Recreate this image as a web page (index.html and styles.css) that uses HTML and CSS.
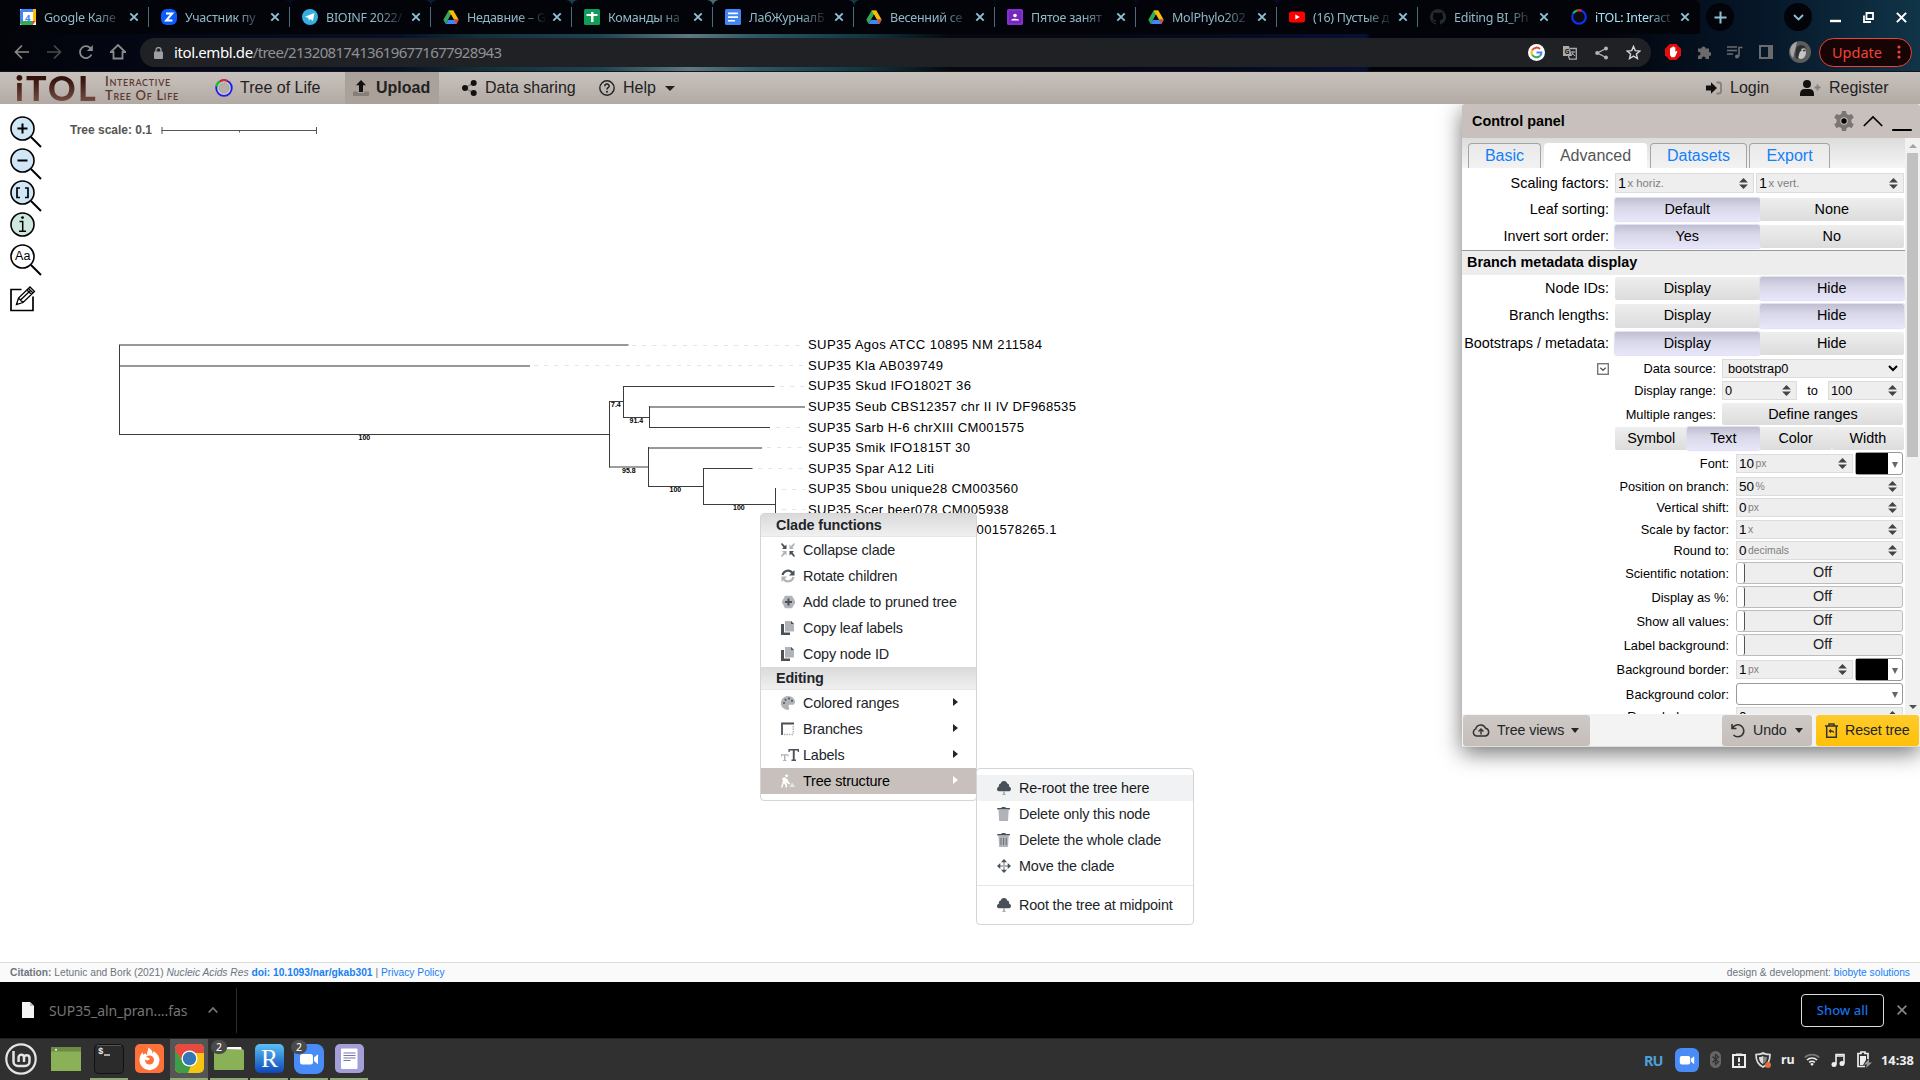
FILE: index.html
```html
<!DOCTYPE html>
<html lang="en">
<head>
<meta charset="utf-8">
<title>iTOL: Interactive Tree Of Life</title>
<link rel="stylesheet" href="styles.css">
</head>
<body>
<svg class="sprite" aria-hidden="true">
  <symbol id="i-x" viewBox="0 0 10 10"><path d="M1.300 1.300l7.400 7.400M8.700 1.300L1.300 8.700" fill="none" stroke="currentColor" stroke-width="1.900"/></symbol>
  <symbol id="i-drive" viewBox="0 0 16 16"><path d="M5.600 1.500h4.800L5.200 10.600 2.700 15 .3 10.800z" fill="#34a853"/><path d="M5.600 1.500h4.800l5.300 9.300h-4.800z" fill="#fbbc04"/><path d="M5.100 10.800h10.600L13.300 15H2.700z" fill="#4285f4"/><path d="M10.900 10.800h4.800L13.300 15z" fill="#ea4335"/><path d="M8 5.800l2.800 5H5.200z" fill="#05060c"/></symbol>
  <symbol id="i-tree" viewBox="0 0 14 14"><path d="M7 0c2 0 3 1.300 3.200 2.600C12 3 12.400 4.500 12 5.600c1.800.6 2.300 2.200 1.800 3.300-.4.900-1.300 1.300-2.300 1.300h-9C1.400 10.200.4 9.800.1 8.900-.3 7.700.4 6.100 2 5.600 1.600 4.400 2 3 3.800 2.600 4 1.300 5 0 7 0z" fill="#495057"/><path d="M6 10h2v2.800l1.200 1.200H4.800L6 12.800z" fill="#b0b4b8"/></symbol>
  <symbol id="i-copy" viewBox="0 0 14 14"><path d="M0 3h3v8.500h6V14H0z" fill="#495057"/><path d="M4 0h6l3 3v7.500H4z" fill="#b0b4b8"/><path d="M10 0l3 3h-3z" fill="#495057"/></symbol>
  <symbol id="i-spin" viewBox="0 0 8 10"><path d="M4 0l4 4H0zM4 10L0 6h8z" fill="#444"/></symbol>
  <symbol id="i-video" viewBox="0 0 30 30"><rect width="30" height="30" rx="8" fill="#4a8cf7"/><rect x="6" y="10" width="13" height="10.500" rx="2.500" fill="#fff"/><path d="M20 13.500l4-3.300v10l-4-3.300z" fill="#fff"/></symbol>
</svg>

<header class="chrome">
  <div class="tabs">
    <div class="tab"><svg class="fav" viewBox="0 0 16 16"><rect width="16" height="16" fill="#fff"/><path d="M0 2a2 2 0 012-2h11v3H3v10H0z" fill="#4285f4"/><path d="M13 0h3v12h-3z" fill="#fbbc04"/><path d="M0 12h13v4H2a2 2 0 01-2-2z" fill="#34a853"/><path d="M12.500 12H16l-3.500 4z" fill="#ea4335"/><text x="5" y="11.500" font-size="9.500" font-weight="700" fill="#4285f4">4</text></svg><span>Google Кале</span><svg class="x"><use href="#i-x"/></svg></div>
    <div class="tab"><svg class="fav" viewBox="0 0 16 16"><rect width="16" height="16" rx="6" fill="#0b5cff"/><path d="M5 4.500h6.200L5.200 11.500h6.200" fill="none" stroke="#fff" stroke-width="2"/></svg><span>Участник пу</span><svg class="x"><use href="#i-x"/></svg></div>
    <div class="tab"><svg class="fav" viewBox="0 0 16 16"><circle cx="8" cy="8" r="8" fill="#37aee2"/><path d="M3 7.800l9.500-3.900-1.600 8-2.600-1.900-1.500 1.400-.4-2.500z" fill="#fff"/></svg><span>BIOINF 2022/</span><svg class="x"><use href="#i-x"/></svg></div>
    <div class="tab"><svg class="fav"><use href="#i-drive"/></svg><span>Недавние – G</span><svg class="x"><use href="#i-x"/></svg></div>
    <div class="tab"><svg class="fav" viewBox="0 0 16 16"><rect width="16" height="16" rx="1.500" fill="#0f9d58"/><path d="M7 3h2.500v10H7zM2.500 5h11v2h-11z" fill="#fff"/></svg><span>Команды на</span><svg class="x"><use href="#i-x"/></svg></div>
    <div class="tab"><svg class="fav" viewBox="0 0 16 16"><rect width="16" height="16" rx="1.500" fill="#4285f4"/><path d="M3 3.500h10v1.700H3zM3 7.200h10v1.700H3zM3 10.900h7v1.700H3z" fill="#fff"/></svg><span>ЛабЖурналБ</span><svg class="x"><use href="#i-x"/></svg></div>
    <div class="tab"><svg class="fav"><use href="#i-drive"/></svg><span>Весенний се</span><svg class="x"><use href="#i-x"/></svg></div>
    <div class="tab"><svg class="fav" viewBox="0 0 16 16"><rect width="16" height="16" rx="1.500" fill="#8430ce"/><rect x="2" y="2" width="12" height="12" fill="#7627bb"/><circle cx="8" cy="6.500" r="1.800" fill="#fff"/><path d="M4 11.500c0-2.400 8-2.400 8 0z" fill="#fff"/></svg><span>Пятое занят</span><svg class="x"><use href="#i-x"/></svg></div>
    <div class="tab"><svg class="fav"><use href="#i-drive"/></svg><span>MolPhylo202</span><svg class="x"><use href="#i-x"/></svg></div>
    <div class="tab"><svg class="fav" viewBox="0 0 16 16"><rect y="2.500" width="16" height="11" rx="2.500" fill="#f00"/><path d="M6.300 5.500l4.500 2.500-4.500 2.500z" fill="#fff"/></svg><span>(16) Пустые д</span><svg class="x"><use href="#i-x"/></svg></div>
    <div class="tab plain"><svg class="fav" viewBox="0 0 16 16"><path d="M8 0a8 8 0 00-2.500 15.600c.4.100.5-.2.500-.4v-1.500c-2.200.5-2.700-1-2.700-1-.4-.9-.9-1.100-.9-1.100-.7-.5.100-.5.100-.5.800.1 1.200.8 1.200.8.700 1.200 1.900.9 2.300.7.100-.5.300-.9.500-1.100-1.800-.2-3.600-.9-3.600-4 0-.9.300-1.600.8-2.100-.1-.2-.4-1 .1-2.100 0 0 .7-.2 2.200.8a7.500 7.500 0 014 0c1.500-1 2.200-.8 2.200-.8.400 1.100.2 1.900.1 2.100.5.600.8 1.300.8 2.100 0 3.100-1.900 3.700-3.700 4 .3.200.6.700.6 1.500v2.200c0 .2.100.5.500.4A8 8 0 008 0z" fill="#24292f"/></svg><span>Editing BI_Ph</span><svg class="x"><use href="#i-x"/></svg></div>
    <div class="tab plain active"><svg class="fav" viewBox="0 0 16 16"><circle cx="8" cy="8" r="6.800" fill="#0b0b10" stroke="#1432ff" stroke-width="2"/><path d="M2.200 4.300A6.800 6.800 0 016 1.500" fill="none" stroke="#0c3" stroke-width="2"/><path d="M6 1.500a6.800 6.800 0 014.500.2" fill="none" stroke="#f22" stroke-width="2"/></svg><span>iTOL: Interact</span><svg class="x"><use href="#i-x"/></svg></div>
    <div class="round"><svg width="13" height="13" viewBox="0 0 13 13"><path d="M6.500 .5v12M.5 6.500h12" stroke="#8fc1d4" stroke-width="2"/></svg></div>
    <div class="round more"><svg width="11" height="7" viewBox="0 0 11 7"><path d="M1 1l4.500 4.500L10 1" fill="none" stroke="#8fc1d4" stroke-width="1.800"/></svg></div>
    <div class="winctl">
      <svg width="11" height="11" viewBox="0 0 11 11"><path d="M0 9h11" stroke="#fff" stroke-width="2.400"/></svg>
      <svg width="11" height="11" viewBox="0 0 11 11"><path d="M3.500 1h6.500v6H3.500zM1 3.500v6.500h7" fill="none" stroke="#fff" stroke-width="1.800"/></svg>
      <svg width="11" height="11" viewBox="0 0 10 10"><path d="M.8.8l8.400 8.400M9.200.8L.8 9.200" stroke="#fff" stroke-width="1.900"/></svg>
    </div>
  </div>
  <div class="toolbar">
    <svg class="nav" viewBox="0 0 16 16"><path d="M15 8H2M8 1.500L1.500 8 8 14.500" fill="none" stroke="#8a8a8a" stroke-width="1.700"/></svg>
    <svg class="nav" viewBox="0 0 16 16"><path d="M1 8h13M8 1.500L14.500 8 8 14.500" fill="none" stroke="#4a4a4a" stroke-width="1.700"/></svg>
    <svg class="nav" viewBox="0 0 16 16"><path d="M13.500 10.500A6 6 0 1113 4.700" fill="none" stroke="#8a8a8a" stroke-width="1.800"/><path d="M14.800 1v6h-6z" fill="#8a8a8a"/></svg>
    <svg class="nav" viewBox="0 0 16 16"><path d="M3.500 14.500V8H.8L8 1l7.200 7h-2.700v6.500z" fill="none" stroke="#8a8a8a" stroke-width="1.800"/></svg>
    <div class="omnibox">
      <svg width="9" height="12" viewBox="0 0 9 12"><rect y="4.500" width="9" height="7.500" rx="1" fill="#9aa0a6"/><path d="M2 5V3a2.500 2.500 0 015 0v2" fill="none" stroke="#9aa0a6" stroke-width="1.300"/></svg>
      <div class="url"><b>itol.embl.de</b>/tree/213208174136196771677928943</div>
      <svg width="17" height="17" viewBox="0 0 17 17"><circle cx="8.500" cy="8.500" r="8.500" fill="#fff"/><path d="M12 5A5 5 0 004.300 6" fill="none" stroke="#ea4335" stroke-width="2"/><path d="M4.300 6a5 5 0 000 5" fill="none" stroke="#fbbc04" stroke-width="2"/><path d="M4.300 11a5 5 0 007.500 1" fill="none" stroke="#34a853" stroke-width="2"/><path d="M11.800 12a5 5 0 001.600-3.500H8.500" fill="none" stroke="#4285f4" stroke-width="2"/></svg>
      <svg width="14" height="15" viewBox="0 0 14 15"><path d="M0 1h6l3 10H0z" fill="#aaa"/><path d="M7 3.500h6.300v10.700H6.500L5.500 11" fill="none" stroke="#aaa" stroke-width="1.300"/><path d="M8 7h4.500M10 6v1c0 2-1 3-2 3.500M9 8l3 3" stroke="#aaa" fill="none"/><text x="1.500" y="8.500" font-size="7" font-weight="700" fill="#222">G</text></svg>
      <svg width="13" height="14" viewBox="0 0 13 14"><path d="M11 2.500L2.500 7l8.500 4.500" fill="none" stroke="#b5b5b5" stroke-width="1.400"/><circle cx="11" cy="2.400" r="2" fill="#b5b5b5"/><circle cx="2.200" cy="7" r="2" fill="#b5b5b5"/><circle cx="11" cy="11.600" r="2" fill="#b5b5b5"/></svg>
      <svg width="15" height="15" viewBox="0 0 16 16"><path d="M8 1.500l1.900 4.500 4.900.4-3.700 3.200 1.100 4.800L8 11.900l-4.200 2.500 1.100-4.800L1.200 6.400l4.900-.4z" fill="none" stroke="#d5d5d5" stroke-width="1.500"/></svg>
    </div>
    <div class="exts">
      <svg width="16" height="16" viewBox="0 0 16 16"><path d="M4.700 0h6.600L16 4.700v6.600L11.300 16H4.700L0 11.300V4.700z" fill="#e40d0d"/><path d="M5 7V4.200h1.300V3.300h1.400v-.8H9v.8h1.300V8l1.200-1.300.9.700-2 4.500-1 1.400H6.500L5 11z" fill="#fff"/></svg>
      <svg width="14" height="14" viewBox="0 0 14 14"><path d="M1 3.500h3.500a2 2 0 114 0H12v3.700a1.900 1.900 0 110 3.600V14H8.500a1.900 1.900 0 10-3.600 0H1v-3.500a1.900 1.900 0 100-3.600z" fill="#6b6b6b"/></svg>
      <svg width="16" height="13" viewBox="0 0 16 13"><path d="M0 1h10M0 4.500h10M0 8h6" stroke="#6b6b6b" stroke-width="1.600"/><circle cx="10" cy="10.500" r="2" fill="#6b6b6b"/><path d="M12 10.500V1.500h3.500" fill="none" stroke="#6b6b6b" stroke-width="1.600"/></svg>
      <svg width="14" height="14" viewBox="0 0 14 14"><path d="M1 1h12v12H1z" fill="none" stroke="#6b6b6b" stroke-width="2"/><path d="M9 1h4v12H9z" fill="#6b6b6b"/></svg>
      <svg width="22" height="22" viewBox="0 0 22 22"><circle cx="11" cy="11" r="11" fill="#5c5c5c"/><ellipse cx="12" cy="11" rx="5" ry="7" fill="#c4c4c4"/><path d="M7 9c0-6 9-7 10-1-4-2-6 0-8 10-3 0-3-5-2-9z" fill="#2e2e2e"/><path d="M10 9.500h2.500M14 9.500h2.500" stroke="#333" stroke-width="1.300"/><path d="M2 6c1-3 4-5 6-5L4 17c-2-2-4-7-2-11z" fill="#a5a5a5"/></svg>
      <div class="update">Update<svg width="4" height="14" viewBox="0 0 4 14"><circle cx="2" cy="2" r="1.600" fill="#f0423a"/><circle cx="2" cy="7" r="1.600" fill="#f0423a"/><circle cx="2" cy="12" r="1.600" fill="#f0423a"/></svg></div>
    </div>
  </div>
</header>

<nav class="sitebar">
  <div class="logo"><span class="l-main">iTOL</span><span class="l-sub"><i>Interactive</i><i>Tree Of Life</i></span></div>
  <a class="item tol"><svg width="18" height="18" viewBox="0 0 18 18"><circle cx="9" cy="9" r="7.800" fill="#c9c3be" stroke="#1c1cf0" stroke-width="1.800"/><circle cx="9" cy="9" r="4.800" fill="#b5b0ac" stroke="#8f8f8f" stroke-dasharray="1 1"/><path d="M1.400 7.500A7.800 7.800 0 015 2.300" fill="none" stroke="#12d012" stroke-width="2"/><path d="M5 2.300a7.800 7.800 0 017.500-.3" fill="none" stroke="#e22" stroke-width="2"/></svg>Tree of Life</a>
  <a class="item upload"><svg width="16" height="16" viewBox="0 0 16 16"><path d="M0 11.500h5v1.500h6v-1.500h5V16H0z" fill="#857e79"/><path d="M8 0l5 5.200H10V12H6V5.200H3z" fill="#111"/></svg>Upload</a>
  <a class="item share"><svg width="15" height="16" viewBox="0 0 15 16"><path d="M11.500 3L3 8l8.500 5" fill="none" stroke="#8d8680" stroke-width="1.500"/><circle cx="11.700" cy="3" r="3" fill="#111"/><circle cx="3" cy="8" r="3" fill="#111"/><circle cx="11.700" cy="13" r="3" fill="#111"/></svg>Data sharing</a>
  <a class="item help"><svg width="16" height="16" viewBox="0 0 16 16"><circle cx="8" cy="8" r="7.200" fill="none" stroke="#222" stroke-width="1.400"/><path d="M5.800 6.200c.2-3 4.600-2.600 4.400 0-.1 1.500-2.200 1.500-2.200 3.200" fill="none" stroke="#222" stroke-width="1.500"/><circle cx="8" cy="11.700" r="1" fill="#222"/></svg>Help<b class="caret"></b></a>
  <a class="item login"><svg width="16" height="14" viewBox="0 0 16 14"><path d="M10.500 1.500h2.200c1.300 0 2.300.9 2.300 2.200v6.600c0 1.300-1 2.200-2.300 2.200h-2.200" fill="none" stroke="#857e79" stroke-width="1.800"/><path d="M0 4.500h5V1.200L11 7l-6 5.800V9.500H0z" fill="#111"/></svg>Login</a>
  <a class="item register"><svg width="21" height="16" viewBox="0 0 21 16"><circle cx="7" cy="4" r="4" fill="#111"/><path d="M0 16v-2.500C0 11 2 9 4.500 9h5C12 9 14 11 14 13.500V16z" fill="#111"/><path d="M17.500 4.500v6M14.500 7.500h6" stroke="#857e79" stroke-width="1.800"/></svg>Register</a>
</nav>

<main class="canvas">
  <div class="tools">
    <svg viewBox="0 0 32 32"><path d="M21 21l10 10" stroke="#000" stroke-width="2"/><circle cx="12.500" cy="12.500" r="11.500" fill="#d0e7f8" stroke="#000" stroke-width="1.600"/><path d="M12.500 7.500v10M7.500 12.500h10" stroke="#000" stroke-width="2"/></svg>
    <svg viewBox="0 0 32 32"><path d="M21 21l10 10" stroke="#000" stroke-width="2"/><circle cx="12.500" cy="12.500" r="11.500" fill="#d0e7f8" stroke="#000" stroke-width="1.600"/><path d="M7.500 12.500h10" stroke="#000" stroke-width="2"/></svg>
    <svg viewBox="0 0 32 32"><path d="M21 21l10 10" stroke="#000" stroke-width="2"/><circle cx="12.500" cy="12.500" r="11.500" fill="#d0e7f8" stroke="#000" stroke-width="1.600"/><path d="M10 8H7v9.500h3M15 8h3v9.500h-3" fill="none" stroke="#000" stroke-width="1.700"/></svg>
    <svg viewBox="0 0 32 32"><circle cx="12.500" cy="12.500" r="11.500" fill="#cee8e0" stroke="#000" stroke-width="1.600"/><circle cx="12.500" cy="5.600" r="1.400"/><path d="M9.500 9.500h3.200v9.500M9 19.200h7" fill="none" stroke="#000" stroke-width="1.500"/></svg>
    <svg viewBox="0 0 32 32"><path d="M21 21l10 10" stroke="#000" stroke-width="2"/><circle cx="12.500" cy="12.500" r="11.500" fill="#fff" stroke="#000" stroke-width="1.600"/><text x="5" y="16" font-size="12.500" textLength="15.500">Aa</text></svg>
    <svg class="edit" viewBox="0 0 32 32"><path d="M11.500 4.500H1v21h22V11.500" fill="none" stroke="#000" stroke-width="1.700"/><path d="M6.500 19.500l2-6.500L20 2l4.500 4.500L13 17.500zM8.500 13l4.500 4.500M17 5l4.500 4.500M18.500 3.500l4.500 4.500M10.500 15L20 6" fill="none" stroke="#000" stroke-width="1.300"/></svg>
  </div>
  <svg class="tree" viewBox="42 104 1420 858" width="1420" height="858">
    <text class="scale" x="70" y="134" textLength="82">Tree scale: 0.1</text>
    <path d="M161.500 130.500H316.500M162 127v7M316.500 127v7M239.500 130v2.500" class="ruler"/>
    <g class="guide">
      <path d="M632 345.500H805M534 365.500H805M780 386.500H805M776 427.500H805M767 447.500H805M758 468.500H805M782 489.500H805M782 509.500H805"/>
    </g>
    <g class="soft"><path d="M119 345H628.500M119 366H530M649 407H805M649 448H762"/></g>
    <g class="branch">
      <path d="M119.500 345V434.500M119 434.500H609.500M609.500 401V467.500M609 401.500H623.500M623.500 386V417.500M623 386.500H774.500M623 417.500H649.500M649.500 406V428M649 427.500H770M609 467H648.500M648.500 447V486.500M648 486.500H703.500M703.500 468V505M703 468.500H752.500M703 504.500H775.500M775.500 488V530"/>
    </g>
    <g class="leaf">
      <text x="808" y="349.200" textLength="234">SUP35 Agos ATCC 10895 NM 211584</text>
      <text x="808" y="369.700" textLength="135">SUP35 Kla AB039749</text>
      <text x="808" y="390.200" textLength="163">SUP35 Skud IFO1802T 36</text>
      <text x="808" y="410.800" textLength="268">SUP35 Seub CBS12357 chr II IV DF968535</text>
      <text x="808" y="431.500" textLength="216">SUP35 Sarb H-6 chrXIII CM001575</text>
      <text x="808" y="451.900" textLength="162">SUP35 Smik IFO1815T 30</text>
      <text x="808" y="472.600" textLength="126">SUP35 Spar A12 Liti</text>
      <text x="808" y="493" textLength="210">SUP35 Sbou unique28 CM003560</text>
      <text x="808" y="513.700" textLength="200.500">SUP35 Scer beer078 CM005938</text>
      <text x="976.500" y="534" textLength="80">001578265.1</text>
    </g>
    <g class="boot">
      <text x="358.500" y="440">100</text><text x="611" y="407">7.4</text><text x="629.500" y="423">91.4</text><text x="622" y="473">95.8</text><text x="669.500" y="492.300">100</text><text x="733" y="510">100</text>
    </g>
  </svg>
</main>

<footer class="cite"><div><b>Citation:</b> Letunic and Bork (2021) <i>Nucleic Acids Res</i> <a><b>doi: 10.1093/nar/gkab301</b></a> | <a>Privacy Policy</a></div><div>design &amp; development: <a>biobyte solutions</a></div></footer>

<section class="downloads">
  <svg width="12" height="16" viewBox="0 0 12 16"><path d="M0 0h8l4 4v12H0z" fill="#f4f4f2"/><path d="M8 0l4 4H8z" fill="#bbb"/></svg>
  <span class="fname">SUP35_aln_pran....fas</span>
  <svg class="chev" width="10" height="6" viewBox="0 0 10 6"><path d="M.7 5.500L5 1l4.300 4.500" fill="none" stroke="#777" stroke-width="1.700"/></svg>
  <i class="vline"></i>
  <button class="showall">Show all</button>
  <svg class="close" width="10" height="10" viewBox="0 0 10 10"><path d="M.6.6l8.800 8.800M9.400.6L.6 9.400" stroke="#8a8a8a" stroke-width="1.500"/></svg>
</section>

<section class="taskbar">
  <div class="apps">
    <div class="app mint"><svg width="32" height="32" viewBox="0 0 32 32"><circle cx="16" cy="16" r="14.700" fill="none" stroke="#e4e4e4" stroke-width="2.200"/><path d="M8.500 8v10.500a4.500 4.500 0 004.500 4.500h7a4.500 4.500 0 004.500-4.500v-4a2.800 2.800 0 00-5.500 0v4.500M19 18.500v-4a2.700 2.700 0 00-5.400 0v4.500" fill="none" stroke="#e4e4e4" stroke-width="2.500"/></svg></div>
    <div class="app folder"><svg width="30" height="24" viewBox="0 0 30 24"><rect width="30" height="24" fill="#8bb158"/><rect width="30" height="4.500" fill="#6c8c43"/><circle cx="5" cy="2.700" r="1" fill="#fff"/></svg></div>
    <div class="app run"><svg width="30" height="30" viewBox="0 0 30 30"><rect x=".5" y=".5" width="29" height="29" rx="4" fill="#2b2b2b" stroke="#111"/><path d="M3 1.500h24" stroke="#555"/><text x="4" y="10" font-family="Liberation Mono" font-size="9" font-weight="700" fill="#eee">$</text><path d="M10 11h6" stroke="#eee" stroke-width="1.300"/></svg></div>
    <div class="app"><svg width="29" height="29" viewBox="0 0 29 29"><rect width="29" height="29" rx="5" fill="#ff7139"/><path d="M13 3.500c4 2 4.500 4 4.500 6 1-.6 1-1.600.8-2.500 4.200 2.500 6.200 6 6.200 9.200a10 10 0 01-20 0c0-4 1.500-6 3-8l.8 2.600 2-1.600c.5.900 1 1.500 2 1.800C11.500 8.500 13.500 7 13 3.500z" fill="#fff"/><circle cx="14.500" cy="16" r="4.500" fill="#ff7139"/><path d="M8 13c3-1 5 .5 7 1.500-1 2-3 2-4.500 1.500z" fill="#fff"/></svg></div>
    <div class="app run cur"><svg width="29" height="29" viewBox="0 0 29 29"><rect width="29" height="29" rx="5" fill="#f6c514"/><path d="M0 8V5a5 5 0 015-5h19a5 5 0 015 5v4H14.500L8 17z" fill="#e84a3f"/><path d="M0 6l9 13.500 7 2L13 29H5a5 5 0 01-5-5z" fill="#3f9c47"/><circle cx="14.500" cy="14.500" r="8" fill="#fff"/><circle cx="14.500" cy="14.500" r="6.700" fill="#3377b5"/></svg></div>
    <div class="app run"><svg width="30" height="24" viewBox="0 0 30 24"><path d="M12 2.500L13.500 0H27l1 3z" fill="#fff"/><rect y="2.500" width="30" height="20.500" rx="1" fill="#8bb158"/></svg><em>2</em></div>
    <div class="app run"><svg width="29" height="29" viewBox="0 0 29 29"><defs><linearGradient id="rg" x2="0" y2="1"><stop stop-color="#5cc0f5"/><stop offset="1" stop-color="#0d47b8"/></linearGradient></defs><rect width="29" height="29" rx="5" fill="url(#rg)"/><text x="6" y="23" font-family="Liberation Serif" font-size="26" fill="#fff" textLength="17" lengthAdjust="spacingAndGlyphs">R</text></svg></div>
    <div class="app run"><svg width="30" height="30"><use href="#i-video"/></svg><em>2</em></div>
    <div class="app run"><svg width="29" height="29" viewBox="0 0 29 29"><rect width="29" height="29" rx="5" fill="#a39fd9"/><rect x="6" y="4.500" width="16.500" height="20.500" rx="1" fill="#fff"/><path d="M8.500 9h12M8.500 11.500h12M8.500 14h12M8.500 16.500h7" stroke="#7673a8" stroke-width="1.100"/></svg></div>
  </div>
  <div class="tray">
    <b class="ru">RU</b>
    <svg width="24" height="24"><use href="#i-video"/></svg>
    <svg class="bt" width="11" height="17" viewBox="0 0 11 17"><rect width="11" height="17" rx="5.500" fill="#666"/><path d="M2.500 5.500l6 5.500-3 2.500v-10l3 2.500-6 5.500" fill="none" stroke="#303030" stroke-width="1.200"/></svg>
    <svg class="clip" width="14" height="16" viewBox="0 0 14 16"><path d="M1 3h12v12H1z" fill="none" stroke="#eee" stroke-width="2"/><path d="M4 1.500h6V4H4z" fill="#eee"/><path d="M7 5.500v4.500M7 11.500v2" stroke="#eee" stroke-width="2"/></svg>
    <svg class="shield" width="16" height="16" viewBox="0 0 16 16"><path d="M8 1c2 1.500 4.500 1.500 7 1.500C15 9 12.500 13 8 15 3.500 13 1 9 1 2.500 3.500 2.500 6 2.500 8 1z" fill="none" stroke="#ddd" stroke-width="1.700"/><path d="M8 4v8C5 10.500 4 8 4 5c1.500 0 3-.3 4-1z" fill="#ddd"/><path d="M8 4v8c3-1.500 4-4 4-7-1.500 0-3-.3-4-1z" fill="#888"/><circle cx="13" cy="13" r="3" fill="#e0703a"/></svg>
    <b class="kb">ru</b>
    <svg class="wifi" width="16" height="13" viewBox="0 0 16 13"><path d="M.7 4.500a10.500 10.500 0 0114.600 0" fill="none" stroke="#777" stroke-width="1.700"/><path d="M3 7a7.200 7.200 0 0110 0M5.200 9.400a4 4 0 015.600 0" fill="none" stroke="#eee" stroke-width="1.700"/><path d="M8 13L6.200 10.900a2.700 2.700 0 013.600 0z" fill="#eee"/></svg>
    <svg class="note" width="14" height="14" viewBox="0 0 14 14"><path d="M5 11.500V1.500h8v9" fill="none" stroke="#eee" stroke-width="1.600"/><path d="M5 3h8" stroke="#eee" stroke-width="1.500"/><circle cx="3" cy="11.500" r="2.500" fill="#eee"/><circle cx="11" cy="10.500" r="2.500" fill="#eee"/></svg>
    <svg class="bat" width="15" height="17" viewBox="0 0 15 17"><path d="M8 15.500H1V2.500h3V1h4v1.500h3V8" fill="none" stroke="#eee" stroke-width="1.700"/><path d="M3 5h6v4l-3 5H3z" fill="#eee"/><path d="M12 8l-5 5.500h3L9 17l6-5.500h-3z" fill="#999"/></svg>
    <b class="clock">14:38</b>
  </div>
</section>

<aside class="panel">
  <div class="p-head"><b>Control panel</b>
    <svg width="20" height="20" viewBox="0 0 20 20"><path d="M8 0h4l.7 3 2 1.100 3-1 2 3.500-2.300 2.100v2.600l2.300 2.100-2 3.500-3-1-2 1.100L12 20H8l-.7-3-2-1.100-3 1-2-3.500 2.300-2.100V8.700L.3 6.600l2-3.500 3 1 2-1.100z" fill="#7b7673"/><circle cx="10" cy="10" r="3.700" fill="#c7c0bc"/><circle cx="10" cy="10" r="2.700" fill="#000"/></svg>
    <svg width="20" height="12" viewBox="0 0 20 12"><path d="M.8 11L10 2l9.200 9" fill="none" stroke="#000" stroke-width="1.700"/></svg>
    <svg width="20" height="20" viewBox="0 0 20 20"><path d="M1 19h18" stroke="#000" stroke-width="2" stroke-linecap="round"/></svg>
  </div>
  <div class="p-main">
    <div class="p-body">
      <div class="p-tabs"><a class="t1">Basic</a><a class="t2 on">Advanced</a><a class="t3">Datasets</a><a class="t4">Export</a></div>
      <div class="row h20 g5"><label>Scaling factors:</label><div class="inp w139"><span>1</span><small>x horiz.</small><svg><use href="#i-spin"/></svg></div><div class="inp grow"><span>1</span><small>x vert.</small><svg><use href="#i-spin"/></svg></div></div>
      <div class="row h23 g5"><label>Leaf sorting:</label><div class="seg"><a class="on">Default</a><a>None</a></div></div>
      <div class="row h23 g4"><label>Invert sort order:</label><div class="seg"><a class="on">Yes</a><a>No</a></div></div>
      <div class="section">Branch metadata display</div>
      <div class="row h23 g2"><label>Node IDs:</label><div class="seg"><a>Display</a><a class="on">Hide</a></div></div>
      <div class="row h24 g4"><label>Branch lengths:</label><div class="seg"><a>Display</a><a class="on">Hide</a></div></div>
      <div class="row h23 g4"><label>Bootstraps / metadata:</label><div class="seg"><a class="on">Display</a><a>Hide</a></div></div>
      <div class="row sm h19 g4"><svg class="fold" width="12" height="12" viewBox="0 0 12 12"><rect x=".7" y=".7" width="10.600" height="10.600" fill="#fff" stroke="#777" stroke-width="1.400"/><path d="M3.300 4.800L6 7.300l2.700-2.500" fill="none" stroke="#555" stroke-width="1.300"/></svg><label>Data source:</label><div class="inp grow sel"><span>bootstrap0</span><svg viewBox="0 0 10 7"><path d="M1 1l4 4 4-4" fill="none" stroke="#000" stroke-width="2"/></svg></div></div>
      <div class="row sm h19 g3"><label>Display range:</label><div class="inp w75"><span>0</span><svg><use href="#i-spin"/></svg></div><i class="to">to</i><div class="inp w75"><span>100</span><svg><use href="#i-spin"/></svg></div></div>
      <div class="row sm h22 g3"><label>Multiple ranges:</label><div class="seg"><a>Define ranges</a></div></div>
      <div class="row h23 g2"><label></label><div class="seg"><a>Symbol</a><a class="on">Text</a><a>Color</a><a>Width</a></div></div>
      <div class="row in h23 g2"><label>Font:</label><div class="inp w117"><span>10</span><small>px</small><svg><use href="#i-spin"/></svg></div><div class="color blk"><i></i><u></u></div></div>
      <div class="row in h19 g2"><label>Position on branch:</label><div class="inp grow"><span>50</span><small>%</small><svg><use href="#i-spin"/></svg></div></div>
      <div class="row in h19 g2"><label>Vertical shift:</label><div class="inp grow"><span>0</span><small>px</small><svg><use href="#i-spin"/></svg></div></div>
      <div class="row in h19 g3"><label>Scale by factor:</label><div class="inp grow"><span>1</span><small>x</small><svg><use href="#i-spin"/></svg></div></div>
      <div class="row in h19 g2"><label>Round to:</label><div class="inp grow"><span>0</span><small>decimals</small><svg><use href="#i-spin"/></svg></div></div>
      <div class="row in h22 g2"><label>Scientific notation:</label><div class="toggle">Off</div></div>
      <div class="row in h22 g2"><label>Display as %:</label><div class="toggle">Off</div></div>
      <div class="row in h22 g2"><label>Show all values:</label><div class="toggle">Off</div></div>
      <div class="row in h22 g2"><label>Label background:</label><div class="toggle">Off</div></div>
      <div class="row in h23 g2"><label>Background border:</label><div class="inp w117"><span>1</span><small>px</small><svg><use href="#i-spin"/></svg></div><div class="color blk"><i></i><u></u></div></div>
      <div class="row in h22 g2"><label>Background color:</label><div class="color wide"><u></u></div></div>
      <div class="row in h19 g2"><label>Rounded corners:</label><div class="inp grow"><span>0</span><small>px</small><svg><use href="#i-spin"/></svg></div></div>
    </div>
    <div class="sbar"><b class="up"></b><i></i><b class="dn"></b></div>
  </div>
  <div class="p-foot">
    <a class="btn views"><svg width="18" height="13" viewBox="0 0 18 13"><path d="M4.500 12A3.700 3.700 0 013.700 4.900a5.200 5.200 0 019.900-.7A4 4 0 0113.500 12z" fill="none" stroke="#333" stroke-width="1.500"/><path d="M9 10.500V5.500M6.500 7.500L9 5l2.500 2.500" fill="none" stroke="#333" stroke-width="1.400"/></svg>Tree views<b class="caret"></b></a>
    <a class="btn undo"><svg width="14" height="15" viewBox="0 0 14 15"><path d="M1 1v4.500h4.500M1.500 5A6 6 0 112.500 12" fill="none" stroke="#333" stroke-width="1.600"/></svg>Undo<b class="caret"></b></a>
    <a class="btn reset"><svg width="13" height="15" viewBox="0 0 13 15"><path d="M0 3h13M4 3V1h5v2M1.700 3.500v10.700h9.600V3.500" fill="none" stroke="#333" stroke-width="1.500"/><path d="M3.500 8L6 5.800v1.400c2 0 3.200.8 3.200 3.300-.8-1.300-1.600-1.500-3.200-1.500v1.300z" fill="#333"/></svg>Reset tree</a>
  </div>
</aside>

<div class="menu main">
  <h6>Clade functions</h6>
  <a><svg viewBox="0 0 14 14"><path d="M0 1l1-1 3 3 1.500-1.500V6H1l1.500-1.500zM14 13l-1 1-3-3-1.500 1.500V8H13l-1.500 1.500z" fill="#495057"/><path d="M14 1l-1-1-3 3-1.500-1.500V6H13l-1.500-1.500zM0 13l1 1 3-3 1.500 1.500V8H1l1.500 1.500z" fill="#b0b4b8"/></svg>Collapse clade</a>
  <a><svg viewBox="0 0 14 14"><path d="M1.500 6A5.600 5.600 0 0111.500 4" fill="none" stroke="#495057" stroke-width="2.200"/><path d="M13.500 1v5.500H8z" fill="#495057"/><path d="M12.500 8a5.600 5.600 0 01-10 2" fill="none" stroke="#b0b4b8" stroke-width="2.200"/><path d="M.5 13V7.500H6z" fill="#b0b4b8"/></svg>Rotate children</a>
  <a><svg viewBox="0 0 14 14"><path d="M4 .8h7L14.500 7 11 13.200H4L.7 7z" fill="#b0b4b8"/><path d="M7.500 3.500v7M4 7h7" stroke="#495057" stroke-width="2"/></svg>Add clade to pruned tree</a>
  <a><svg><use href="#i-copy"/></svg>Copy leaf labels</a>
  <a><svg><use href="#i-copy"/></svg>Copy node ID</a>
  <h6 class="mid">Editing</h6>
  <a><svg viewBox="0 0 14 14"><path d="M7 0c4 0 7 2.800 7 6 0 2-1.500 2.800-3 2.800H9c-1.500 0-1.800 1.400-1.100 2.400.6 1 .4 2.800-1.200 2.800A7 7 0 017 0z" fill="#b0b4b8"/><circle cx="3" cy="7" r="1" fill="#495057"/><circle cx="4.500" cy="3.700" r="1" fill="#495057"/><circle cx="8" cy="2.500" r="1" fill="#495057"/><circle cx="11" cy="4.800" r="1" fill="#495057"/></svg>Colored ranges<s></s></a>
  <a><svg viewBox="0 0 14 14"><path d="M1 13V1.500h12" fill="none" stroke="#495057" stroke-width="1.800"/><path d="M3 12.500h10M12.300 4v8" fill="none" stroke="#b0b4b8" stroke-width="1.500" stroke-dasharray="1.500 1"/></svg>Branches<s></s></a>
  <a><svg class="tt" viewBox="0 0 18 14"><path d="M7.500 4V1H18v3h-1.300V2.500h-3v9H15V13H10.500v-1.500h1.300v-9h-3V4z" fill="#495057"/><path d="M0 8.500V6.300h7.500v2.200h-1V7.500h-2v4.500H5.500v1H2v-1h1V7.500H1v1z" fill="#b0b4b8"/></svg>Labels<s></s></a>
  <a class="hot"><svg viewBox="0 0 15 14"><circle cx="6" cy="1.500" r="1.500" fill="#fff"/><path d="M1 4l3-1 3 2 1.500 3.500 1.500 1-.7 1.200L6.500 9.500 5 8l1.500 3V14H4.800v-2.500L3 9.500 1.500 14H0l2-7z" fill="#fff"/><path d="M9 13.500L12 8.500l3 5z" fill="#e8e4e1"/></svg>Tree structure<s></s></a>
</div>
<div class="menu sub">
  <a class="hov"><svg><use href="#i-tree"/></svg>Re-root the tree here</a>
  <a><svg viewBox="0 0 14 14"><path d="M1.500 3h10.200l-.7 11H2.200z" fill="#b0b4b8"/><path d="M.3 1h4L5 0h3.200l.7 1h4v1.500H.3z" fill="#495057"/></svg>Delete only this node</a>
  <a><svg viewBox="0 0 14 14"><path d="M1.500 3h10.200l-.7 11H2.200z" fill="#b0b4b8"/><path d="M4 5v7M6.600 5v7M9.200 5v7" stroke="#6a7076"/><path d="M.3 1h4L5 0h3.200l.7 1h4v1.500H.3z" fill="#495057"/></svg>Delete the whole clade</a>
  <a><svg viewBox="0 0 14 14"><path d="M7 2v10M2 7h10" stroke="#b0b4b8" stroke-width="1.800"/><path d="M7 0l3 3.300H4zM7 14l3-3.300H4zM0 7l3.300-3v6zM14 7l-3.300-3v6z" fill="#495057"/></svg>Move the clade</a>
  <hr>
  <a><svg><use href="#i-tree"/></svg>Root the tree at midpoint</a>
</div>
</body>
</html>
```

FILE: styles.css
```css
*{box-sizing:border-box}
html,body{margin:0;height:100%}
body{width:1920px;height:1080px;overflow:hidden;display:flex;flex-direction:column;background:#fff;font-family:"Liberation Sans",Arial,sans-serif;font-size:14.4px;color:#212529;position:relative}
svg{display:block;flex:none}
.sprite{position:absolute;width:0;height:0}

/* browser frame */
.chrome{height:72px;flex:none;font-family:"Noto Sans",sans-serif;background:
  linear-gradient(90deg,transparent 1610px,rgba(6,26,46,.75) 1760px,rgba(18,56,76,.9) 1920px),
  linear-gradient(90deg,#03040a 0,#040818 200px,#061024 400px,#12303c 480px,#1d4450 600px,#5d7880 690px,#2a5662 760px,#123842 860px,#05080f 950px,#05091a 1200px,#071034 1366px,#02030a 1370px,#03060f 1650px,#06121f 1920px);border-bottom:1px solid #15161a}
.tabs{height:34px;display:flex;align-items:center;padding-left:8px}
.tab{width:141px;height:34px;display:flex;align-items:center;padding-left:12px;background:#03040a;flex:none;position:relative;color:#8fb9c6;border-radius:6px 6px 0 0}
.tab::after{content:"";width:1px;height:20px;flex:none;background:#4d6b78;margin-left:9px}
.tab.plain::after{background:transparent}
.tab .fav{width:16px;height:16px}
.tab span{width:79px;margin-left:8px;font-size:12.5px;white-space:nowrap;letter-spacing:-.25px;-webkit-mask-image:linear-gradient(90deg,#000 52px,transparent 80px);mask-image:linear-gradient(90deg,#000 52px,transparent 80px)}
.tab .x{width:10px;height:10px;margin-left:6px;color:#8fc1d4}
.tab.active{color:#a6e0f2}
.round{width:28px;height:28px;border-radius:50%;background:#03040a;display:flex;align-items:center;justify-content:center;margin-left:6px;flex:none}
.round.more{margin-left:50px}
.winctl{display:flex;gap:22px;margin-left:18px}
.toolbar{height:37px;display:flex;align-items:center;padding:0 8px 1px 14px}
.nav{width:16px;height:16px;margin-right:16px}
.omnibox{width:1511px;flex:none;height:29px;margin-top:1px;border-radius:15px;background:#202124;display:flex;align-items:center;padding:0 10px 0 14px;margin-left:-2px}
.omnibox svg+svg{margin-left:18px}
.url{flex:1;margin-left:11px;font-size:15px;line-height:20px;color:#8d9196;letter-spacing:-.68px;padding-bottom:2px}
.url b{font-weight:400;color:#fff;letter-spacing:-.4px}
.exts{flex:1;display:flex;align-items:center;justify-content:space-between;margin-left:14px}
.update{width:93px;height:29px;border:1.5px solid #f0423a;border-radius:15px;background:#170505;color:#f0423a;display:flex;align-items:center;justify-content:space-between;padding:0 10px 0 12px;font-size:14.5px;margin-left:-8px}

/* site navigation */
.sitebar{height:32px;flex:none;display:flex;align-items:center;background:linear-gradient(#c8c2bd,#b2a9a3);font-size:16px;color:#212121}
.logo{display:flex;align-items:center;width:215px;flex:none;padding-left:15px}
.l-main{font:900 34px/32px "Lato",sans-serif;width:90px;letter-spacing:2.3px;background:linear-gradient(#35120c 20%,#7a5348);-webkit-background-clip:text;background-clip:text;color:transparent}
.l-sub{display:flex;flex-direction:column;font:600 13px/14.500px "Lato",sans-serif;font-variant:small-caps;color:#5f382e;letter-spacing:.7px;white-space:nowrap}
.l-sub i{font-style:normal}
.item{height:32px;display:flex;align-items:center;gap:8px;white-space:nowrap}
.tol{width:106px;gap:7px}
.upload{margin-left:24px;padding:0 8px;gap:7px;background:#aaa19b;font-weight:700;width:94px}
.share{margin-left:23px;width:137px}
.help{width:150px}
.help .caret{margin-left:1px}
.caret{display:inline-block;border:5px solid transparent;border-top-color:currentColor;border-bottom:0}
.login{margin-left:auto;width:94px}
.register{width:120px}

/* tree canvas */
.canvas{height:858px;flex:none;display:flex}
.tools{width:42px;flex:none;padding:12px 0 0 10px}
.tools svg{width:32px;height:32px}
.tools .edit{margin-top:9px}
.scale{font-weight:700;font-size:12px;fill:#555}
.ruler{stroke:#555;fill:none}
.branch{stroke:#3c3c3c;fill:none}
.soft{stroke:#777;stroke-width:1.4;fill:none}
.guide{stroke:#e4e4e4;fill:none;stroke-dasharray:4 6.2}
.leaf{font-size:13.100px;fill:#000}
.boot{font-weight:700;font-size:7px;fill:#000}

.cite{height:20px;flex:none;border-top:1px solid #dcdcdc;background:#fafafa;display:flex;justify-content:space-between;align-items:center;padding:0 10px;font-size:10.240px;color:#6c757d}
.cite a{color:#1680f5}

.downloads{height:57px;flex:none;background:#000;display:flex;align-items:center;padding:0 13px 0 22px;font-family:"Noto Sans",sans-serif;border-bottom:1px solid #222}
.fname{width:138px;margin-left:15px;font-size:14px;letter-spacing:-.08px;color:#757575;white-space:nowrap}
.chev{margin-left:21px}
.vline{width:1px;height:45px;background:#2c2c2c;margin-left:18px}
.showall{margin-left:auto;width:83px;height:33px;border:1px solid #dadce0;border-radius:4px;background:#000;color:#1a6fe0;font:500 13px "Noto Sans",sans-serif;padding:0}
.close{margin-left:13px}

.taskbar{height:41px;flex:none;background:#303030;display:flex;justify-content:space-between;font-family:"Noto Sans",sans-serif;color:#eee}
.apps{display:flex;gap:2px;padding-left:10px}
.app{width:38px;height:41px;display:flex;align-items:center;justify-content:center;position:relative;border-bottom:2px solid transparent}
.app.mint{margin-left:-8px;width:38px;margin-right:5px}
.app.folder{margin-right:3px}
.app.run{border-bottom-color:#8fa876}
.app.cur{background:#555}
.app em{position:absolute;left:1px;top:1px;width:16px;height:14px;border-radius:7px;background:#4a4a4a;font:500 10.500px/14px "Noto Sans",sans-serif;text-align:center;color:#eee}
.tray{display:flex;align-items:center;padding-right:5px;font-size:13px}
.ru{color:#4fa0d8;font-size:14.500px;margin-right:13px;font-weight:700;width:18px;letter-spacing:-.9px}
.bt{margin-left:11px}.clip{margin-left:11px}.shield{margin-left:9px}.kb{margin-left:10px;width:14px;font-size:12.500px}
.wifi{margin-left:9px}.note{margin-left:11px}.bat{margin-left:12px}.clock{margin-left:9px;width:34px;font-size:12.800px}

/* control panel, floating over the canvas */
.panel{position:absolute;left:1462px;top:104px;width:458px;height:643px;display:flex;flex-direction:column;background:#fff;box-shadow:0 6px 22px rgba(0,0,0,.55);color:#000;border-radius:3px 3px 0 0;clip-path:inset(0 0 -60px -60px)}
.p-head{height:34px;flex:none;background:#c7c0bc;display:flex;align-items:center;gap:9px;padding:0 8px 1px 10px;border-radius:3px 3px 0 0}
.p-head b{margin-right:auto}
.p-main{height:576px;flex:none;display:flex}
.p-body{width:443px;overflow:hidden}
.p-tabs{height:30px;display:flex;align-items:flex-end;gap:3px;padding-left:6px;background:linear-gradient(#dcdcdc,#f5f5f5);font-size:16px}
.p-tabs a{height:25px;border:1px solid #a5a5a5;border-bottom:0;border-radius:4px 4px 0 0;background:linear-gradient(#e9e9e9,#f2f2f2);text-align:center;line-height:24px;color:#1380f8}
.p-tabs .on{background:#fff;border-color:#fff;color:#555}
.t1{width:73px}.t2{width:103px}.t3{width:97px}.t4{width:81px}
.p-tabs .t4{margin-left:-1px}
.row{display:flex;width:442px}
.row label{width:147px;margin-right:6px;text-align:right;align-self:center;white-space:nowrap;flex:none}
.h23>label,.h24>label{padding-bottom:2px}
.h19{height:19px}.h20{height:20px}.h22{height:22px}.h23{height:23px}.h24{height:24px}
.g2{margin-top:2px}.g3{margin-top:3px}.g4{margin-top:4px}.g5{margin-top:5px}
.inp{display:flex;align-items:center;background:#eee;border:1px solid #dcdcdc;padding:0 5px 0 2px;height:19px;align-self:center;white-space:nowrap}
.h20 .inp{height:20px;margin-right:2px}
.h20 .inp+.inp{margin-right:0;padding-right:5px}
.inp small{font-size:11.300px;color:#808080;margin-left:1.500px}
.inp svg{width:9px;height:11px;margin-left:auto}
.w139{width:139px}.w75{width:75px}.w117{width:117px}.grow{flex:1}
.seg{flex:1;display:flex;height:100%}
.seg a{flex:1;display:flex;align-items:center;justify-content:center;padding-bottom:2px;background:linear-gradient(#eee,#dcdcdc);border-radius:2px}
.seg .on{background:linear-gradient(#c0bfd2,#d8d7e8 40%,#e8e6fa);box-shadow:0 0 1px 1px #dfdff2}
.section{margin-top:2px;height:25px;border-top:1px solid #999;background:#ededed;font-weight:700;padding-left:5px;line-height:23px}
.sm{width:441px}
.sm label{font-size:12.800px;margin-left:auto;width:auto}
.sm .grow,.sm .seg{flex:0 0 181px}
.sm .seg a{padding:0 0 0 1px}
.fold{align-self:center;margin-left:135px}
.sel{padding:0 4px 0 5px}
.sel svg{width:10px;height:7px}
.to{font-style:normal;font-size:12.800px;width:31px;text-align:center;align-self:center}
.sm .inp{font-size:12.800px}
.in{width:441px}
.in label{width:267px;margin-right:7px;font-size:12.800px;padding:0}
.in .inp small{font-size:10.400px}
.in .inp{font-size:13.500px}
.color{border:1px solid #999;border-radius:3px;background:#fff;margin-left:2px;width:48px;display:flex;align-items:center;justify-content:flex-end;padding-right:4px}
.color i{width:32px;height:100%;background:#000;margin-right:auto}
.color u{border:3.500px solid transparent;border-top:6px solid #666;border-bottom:0;margin-top:2px}
.color.wide{margin-left:0;flex:1}
.toggle{flex:1;background:#eee;border:1px solid #bbbcc0;border-radius:3px;text-align:center;line-height:18px;padding-left:6px;position:relative;color:#222}
.toggle::before{content:"";position:absolute;left:0;top:0;bottom:0;width:7px;background:#fff;border-right:1px solid #555;border-radius:2px}
.sbar{width:15px;background:#f1f1f1;display:flex;flex-direction:column;align-items:center;padding:6px 0 5px}
.sbar i{width:11px;height:304px;margin-top:5px;background:#c1c1c1}
.sbar b{border:4px solid transparent}
.sbar .up{border-bottom-color:#a3a3a3;border-top:0}
.sbar .dn{border-top-color:#505050;border-bottom:0;margin-top:auto}
.p-foot{height:33px;background:#f3f3f3;display:flex;padding:1px;align-items:flex-start;border-bottom:1px solid #ddd}
.btn{height:31px;border-radius:3px;background:linear-gradient(#cfc9c6,#c5beb9);display:flex;align-items:center;gap:7px;padding:0 9px 1px;color:#212529;white-space:nowrap;font-size:14.200px;letter-spacing:-.08px}
.btn .caret{border-width:5px 4.500px 0}
.undo{gap:8px}
.views{width:127px}
.undo{width:90px;margin-left:auto}
.reset{width:103px;margin-left:4px;background:linear-gradient(#ffca2c,#ffc107)}

/* context menus */
.menu{position:absolute;background:#fff;border:1px solid #d5d5d5;border-radius:4px}
.menu.main{left:760px;top:513px;width:217px;height:288px}
.menu.sub{left:976px;top:768px;width:218px;height:157px;padding-top:6px}
.menu h6{margin:0;height:23px;padding-left:15px;font-size:14.400px;letter-spacing:-.15px;line-height:23px;background:linear-gradient(#dadada,#f0f0f0);border-bottom:1px solid #e6e6e6;border-radius:3px 3px 0 0}
.menu h6.mid{border-radius:0}
.menu a{height:26px;display:flex;align-items:center;padding-left:20px;letter-spacing:-.16px}
.menu a svg{width:14px;height:14px;margin-right:8px}
.menu a .tt{width:18px;margin-right:4px}
.menu s{margin:-3px 18px 0 auto;border:4.500px solid transparent;border-left:5px solid #212529;border-right:0}
.menu .hot{background:#c7c0bc;color:#000}
.menu .hot s{border-left-color:#fff}
.menu .hov{background:#f1f2f4;color:#16181b}
.menu hr{margin:6px 0;border:0;border-top:1px solid #e3e5e8;height:1px}
```
